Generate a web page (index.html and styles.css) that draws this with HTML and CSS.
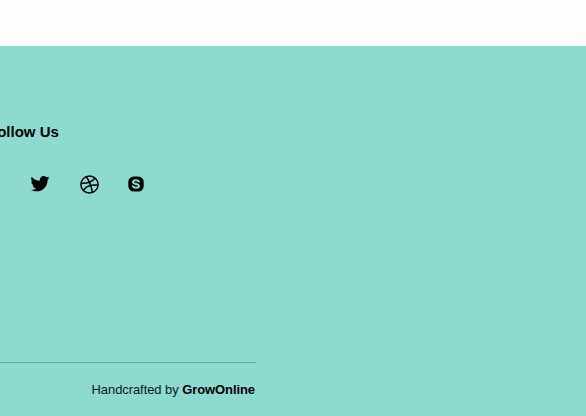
FILE: index.html
```html
<!DOCTYPE html>
<html lang="en">
<head>
<meta charset="utf-8">
<title>Footer</title>
<link rel="stylesheet" href="styles.css">
</head>
<body>
<header class="topbar"></header>
<footer class="footer">
  <div class="column">
    <h4 class="heading">Follow Us</h4>
    <div class="socials">
      <a class="social twitter" href="#" aria-label="Twitter">
        <svg width="20" height="16" viewBox="0 0 24 20"><path d="M24 2.4c-.9.4-1.800.7-2.800.8 1-.6 1.800-1.600 2.200-2.700-1 .6-2 1-3.100 1.200C19.300.7 18 0 16.600 0c-2.700 0-4.900 2.200-4.900 4.900 0 .4 0 .8.100 1.100C7.700 5.800 4.100 3.900 1.700.9c-.4.700-.7 1.600-.7 2.500 0 1.700.9 3.200 2.200 4.100-.8 0-1.600-.2-2.200-.6v.1c0 2.400 1.700 4.400 3.900 4.800-.4.100-.8.200-1.300.2-.3 0-.6 0-.9-.1.600 2 2.400 3.400 4.600 3.400-1.700 1.300-3.800 2.100-6.100 2.100-.4 0-.8 0-1.200-.1C2.200 18.300 4.800 19.200 7.500 19.200c9.100 0 14-7.500 14-14v-.6c1-.7 1.800-1.500 2.500-2.200z" fill="#000"/></svg>
      </a>
      <a class="social dribbble" href="#" aria-label="Dribbble">
        <svg width="19" height="19" viewBox="0 0 19 19" fill="none" stroke="#000" stroke-width="1.500"><circle cx="9.500" cy="9.500" r="8.600"/><path d="M6 1.600c2.500 3 4.800 7.200 6.400 15.800M1 8.300c6 .3 10.500-.8 14.200-5.200M3.300 15.600c2.500-4.500 7-6.500 14.900-5.400"/></svg>
      </a>
      <a class="social skype" href="#" aria-label="Skype">
        <svg width="16" height="16" viewBox="0 0 16 16"><rect x="0.300" y="0.500" width="15.400" height="15" rx="5.500" fill="#000"/><path d="M11 5.500C10.400 4.600 9.300 4.200 8 4.200c-1.600 0-3 .6-3 1.800 0 2.600 6 1.300 6 4 0 1.200-1.400 1.800-3 1.800-1.500 0-2.700-.6-3.200-1.600" fill="none" stroke="#8ddad0" stroke-width="2" stroke-linecap="round"/></svg>
      </a>
    </div>
    <div class="credit-row">
      <p class="credit">Handcrafted by <strong>GrowOnline</strong></p>
    </div>
  </div>
</footer>
</body>
</html>
```
FILE: styles.css
```css
* { box-sizing: border-box; }
html, body { margin: 0; height: 100%; overflow: hidden; }
body {
  font-family: "Liberation Sans", Arial, sans-serif;
  background: #8ddad0;
  color: #000;
}
.topbar {
  height: 46px;
  background: #fefdfc;
}
.footer {
  height: 370px;
  background: #8ddad0;
  overflow: hidden;
}
.column {
  width: 256px;
  display: flex;
  flex-direction: column;
  height: 100%;
}
.heading {
  margin: 77px 0 0 -12px;
  font-size: 15px;
  line-height: 18px;
  font-weight: 700;
}
.socials {
  display: flex;
  align-items: center;
  margin-top: 33px;
  padding-left: 30px;
  height: 20px;
}
.social {
  display: flex;
}
.twitter { margin-right: 30px; }
.dribbble { margin-right: 29px; }
.credit-row {
  margin-top: 168px;
  border-top: 1px solid #62a69e;
  padding-top: 19px;
  text-align: right;
}
.credit {
  margin: 0;
  padding-right: 1px;
  font-size: 13px;
  line-height: 15px;
  letter-spacing: -0.08px;
  color: #0b1a1a;
}
.credit strong { color: #000; }
```
